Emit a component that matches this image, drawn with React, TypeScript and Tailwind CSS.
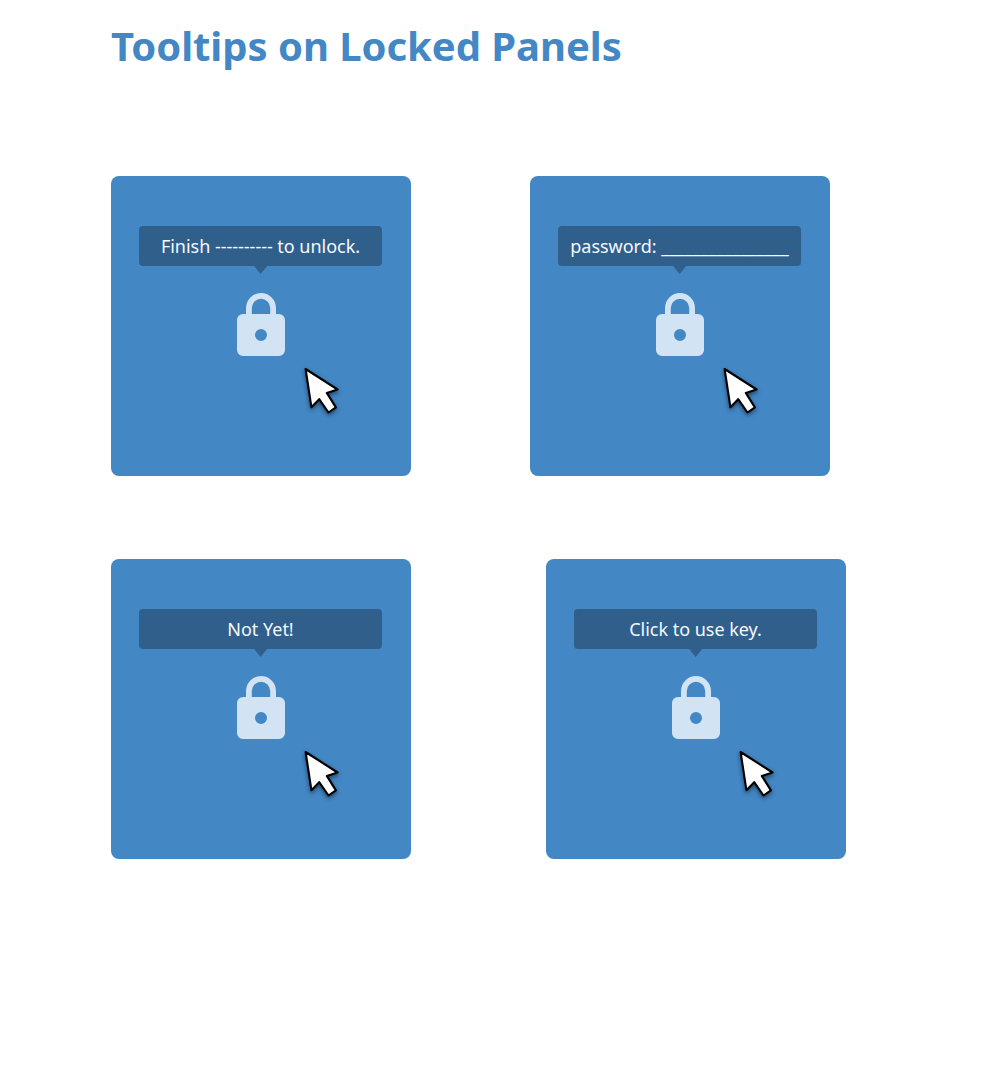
function Lock() {
  return (
    <svg width="48" height="63" viewBox="0 0 48 63" className="mt-[27px] block shrink-0" aria-hidden="true">
      <path
        fill="#d2e3f3"
        fillRule="evenodd"
        d="M9 21V15A15 15 0 0 1 39 15V21H42A6 6 0 0 1 48 27V57A6 6 0 0 1 42 63H6A6 6 0 0 1 0 57V27A6 6 0 0 1 6 21ZM14.8 21H33.2V15A9.2 9.2 0 0 0 14.8 15ZM24 36A6 6 0 1 0 24 48A6 6 0 1 0 24 36Z"
      />
    </svg>
  );
}

function Cursor() {
  return (
    <svg
      width="46"
      height="56"
      viewBox="0 0 46 56"
      className="absolute left-[189px] top-[187px] drop-shadow-[0_2px_2px_rgba(0,0,0,0.5)]"
      aria-hidden="true"
    >
      <path
        d="M5.6 6L37.6 26.5L26.8 29.9L35.9 44.4L28.5 49.5L19.2 36.2L11.4 44.2Z"
        fill="#fff"
        stroke="#000"
        strokeWidth="2.1"
        strokeLinejoin="round"
      />
    </svg>
  );
}

function Panel({ text }: { text: string }) {
  return (
    <section className="relative flex h-[300px] w-[300px] shrink-0 flex-col items-center rounded-lg bg-[#4387c5] pt-[50px]">
      <div className="relative mr-px flex h-10 w-[243px] shrink-0 items-center justify-center rounded bg-[#305f8c] text-[18px] leading-6 tracking-[-0.02px] whitespace-nowrap text-[#f5faff]">
        {text}
        <svg width="15" height="8" viewBox="0 0 15 8" className="absolute left-[114px] top-10" aria-hidden="true">
          <path d="M1.1 0H14.1L7.6 8Z" fill="#305f8c" />
        </svg>
      </div>
      <Lock />
      <Cursor />
    </section>
  );
}

export default function App() {
  return (
    <main className="h-[1080px] w-[1000px] overflow-hidden bg-white pl-[111px] font-['Noto_Sans',sans-serif]">
      <h1 className="h-[176px] pt-[19px] text-[40px] leading-[54px] font-bold tracking-[-0.04px] text-[#4387c5]">Tooltips on Locked Panels</h1>
      <div className="flex gap-[119px]">
        <Panel text="Finish ---------- to unlock." />
        <Panel text="password: ________________" />
      </div>
      <div className="mt-[83px] flex gap-[135px]">
        <Panel text="Not Yet!" />
        <Panel text="Click to use key." />
      </div>
    </main>
  );
}
